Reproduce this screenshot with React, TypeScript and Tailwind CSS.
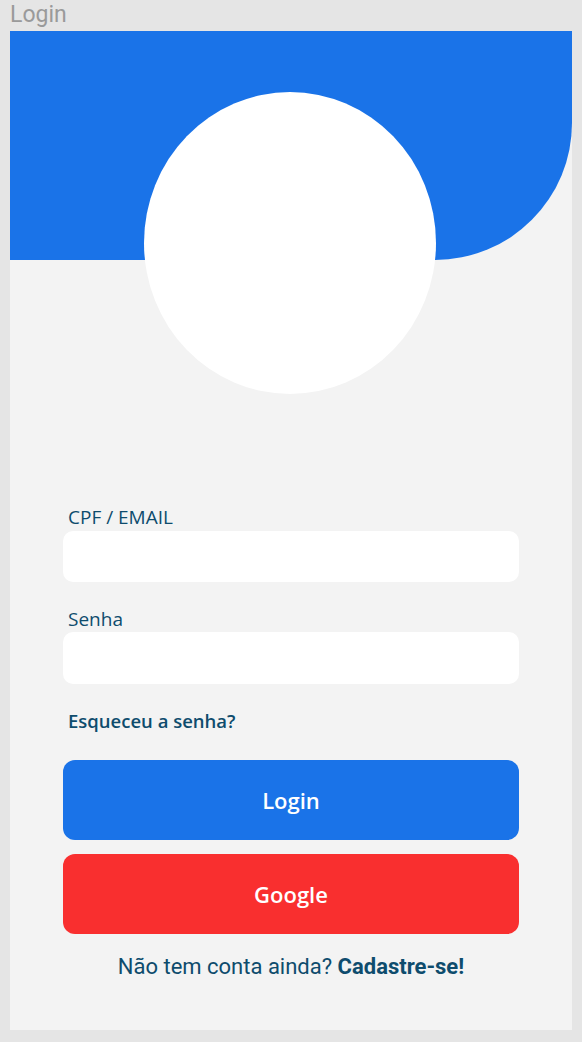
import React from 'react';

const LoginScreen: React.FC = () => {
  return (
    <div className="min-h-[1042px] bg-[#e5e5e5] px-[10px] pb-[12px]">
      <div className="h-[31px] text-[23px] leading-[29px] text-[#9a9a9a] font-['Roboto',sans-serif]">
        Login
      </div>

      <div className="bg-[#f3f3f3] h-[999px] font-['Open_Sans',sans-serif]">
        {/* header */}
        <div className="relative h-[229px] bg-[#1a73e8] rounded-br-[137px]">
          <div className="absolute left-[134px] top-[61px] w-[292px] h-[302px] rounded-[50%] bg-white"></div>
        </div>

        {/* form */}
        <div className="px-[53px] pt-[246px]">
          <label className="block pl-[5px] h-[22px] text-[19px] leading-[22px] text-[#0e4c6d]">
            CPF / EMAIL
          </label>
          <input
            type="text"
            className="mt-[3px] block w-full h-[51px] rounded-[10px] bg-white outline-none"
          />

          <label className="block mt-[26px] pl-[5px] h-[22px] text-[19px] leading-[22px] text-[#0e4c6d]">
            Senha
          </label>
          <input
            type="password"
            className="mt-[2px] block w-full h-[52px] rounded-[10px] bg-white outline-none"
          />

          <p className="mt-[26px] pl-[5px] h-[22px] text-[18.5px] leading-[22px] font-semibold text-[#0e4c6d]">
            Esqueceu a senha?
          </p>

          <button className="mt-[28px] w-full h-[80px] rounded-[12px] bg-[#1a73e8] text-white text-[22px] font-semibold">
            Login
          </button>
          <button className="mt-[14px] w-full h-[80px] rounded-[12px] bg-[#f92f2f] text-white text-[22px] font-semibold">
            Google
          </button>

          <p className="mt-[18px] text-center text-[22px] leading-[30px] text-[#0e4c6d] font-['Roboto',sans-serif]">
            Não tem conta ainda? <span className="font-bold">Cadastre-se!</span>
          </p>
        </div>
      </div>
    </div>
  );
};

export default function App() {
  return <LoginScreen />;
}
